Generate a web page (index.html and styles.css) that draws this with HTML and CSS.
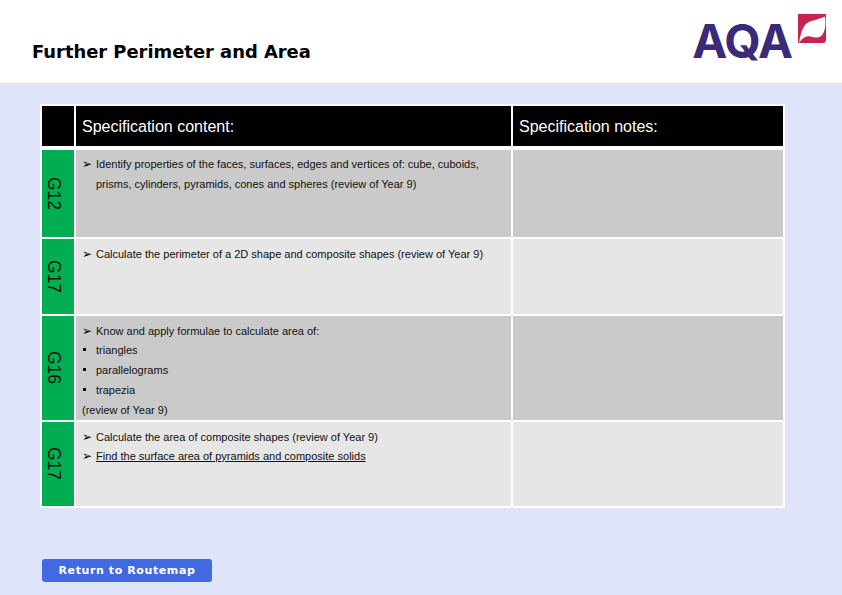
FILE: index.html
```html
<!DOCTYPE html>
<html lang="en">
<head>
<meta charset="utf-8">
<title>Further Perimeter and Area</title>
<link rel="stylesheet" href="styles.css">
</head>
<body>
<header class="top">
  <h1 class="title">Further Perimeter and Area</h1>
  <div class="logo">
    <span class="logo-text">AQA</span>
    <svg class="leaf" viewBox="0 0 28 29" width="28" height="29" aria-hidden="true">
      <path d="M0 0H28V25.500Q28 29 24.500 29H0Z" fill="#c8234f"/>
      <path d="M1 29C2 21 4 15 7 11C11.500 6 20 6 27 2.500C28 10 27.500 16 24.500 20.500C21.500 24.500 17 24 12 22.500C8 21.500 4.500 24 1 29Z" fill="#fff"/>
    </svg>
  </div>
</header>
<main class="content">
  <section class="spec">
    <div class="head blank"></div>
    <div class="head">Specification content:</div>
    <div class="head">Specification notes:</div>

    <div class="code first-row"><span>G12</span></div>
    <div class="cell dark first-row">
      <p class="arrow">Identify properties of the faces, surfaces, edges and vertices of: cube, cuboids,</p>
      <p class="cont">prisms, cylinders, pyramids, cones and spheres (review of Year 9)</p>
    </div>
    <div class="cell dark first-row"></div>

    <div class="code row-b"><span>G17</span></div>
    <div class="cell light row-b">
      <p class="arrow">Calculate the perimeter of a 2D shape and composite shapes (review of Year 9)</p>
    </div>
    <div class="cell light row-b"></div>

    <div class="code row-c"><span>G16</span></div>
    <div class="cell dark row-c">
      <p class="arrow">Know and apply formulae to calculate area of:</p>
      <p class="square">triangles</p>
      <p class="square">parallelograms</p>
      <p class="square">trapezia</p>
      <p class="plain">(review of Year 9)</p>
    </div>
    <div class="cell dark row-c"></div>

    <div class="code row-d"><span>G17</span></div>
    <div class="cell light row-d">
      <p class="arrow">Calculate the area of composite shapes (review of Year 9)</p>
      <p class="arrow"><u>Find the surface area of pyramids and composite solids</u></p>
    </div>
    <div class="cell light row-d"></div>
  </section>
  <a class="return" href="#">Return to Routemap</a>
</main>
</body>
</html>
```
FILE: styles.css
```css
* { box-sizing: border-box; }
html, body { margin: 0; padding: 0; }
body {
  width: 842px;
  height: 595px;
  overflow: hidden;
  background: #e0e4fb;
  font-family: "Liberation Sans", Arial, sans-serif;
}
.top {
  height: 83px;
  background: #fff;
  display: flex;
  justify-content: space-between;
  padding: 14px 16px 0 32px;
}
.title {
  margin: 26px 0 0;
  font: bold 17.900px/24px "DejaVu Sans", Verdana, sans-serif;
  color: #000;
}
.logo {
  display: flex;
  align-items: flex-start;
  gap: 6px;
}
.logo-text {
  margin-top: 2px;
  font: 700 47px/50px Inter, "Liberation Sans", Arial, sans-serif;
  letter-spacing: -1px;
  color: #3b2a78;
}
.leaf { display: block; }
.content {
  padding: 21px 0 0 40px;
}
.spec {
  width: 745px;
  background: #fff;
  padding: 2px;
  display: grid;
  grid-template-columns: 32px 435px 270px;
  grid-template-rows: 40px 89px 75px 104px 84px;
  column-gap: 2px;
  row-gap: 2px;
}
.head {
  background: #000;
  color: #fff;
  font-size: 16px;
  line-height: 42px;
  padding-left: 6px;
}
.first-row { margin-top: 2px; }
.code {
  background: #00ae52;
  display: flex;
  align-items: center;
  justify-content: center;
}
.code span {
  writing-mode: vertical-rl;
  font-size: 17.500px;
  line-height: 24px;
  color: #06140c;
  margin-left: -8px;
}
.cell {
  padding-top: 6px;
  font-size: 11px;
  line-height: 20px;
  color: #111;
}
.cell.first-row { padding-top: 5px; }
.dark { background: #cacaca; }
.light { background: #e6e6e6; }
.cell p {
  margin: 0;
  position: relative;
  padding-left: 20px;
}
.cell .arrow { line-height: 19px; }
.row-c .arrow { margin-bottom: -1px; }
.cell .plain { padding-left: 6px; }
.arrow::before {
  content: "\27A2";
  position: absolute;
  left: 6px;
  font-family: "DejaVu Sans", sans-serif;
  font-size: 12px;
  color: #000;
}
.square::before {
  content: "";
  position: absolute;
  left: 7px;
  top: 8px;
  width: 3px;
  height: 3px;
  background: #111;
}
.return {
  display: block;
  width: 170px;
  height: 23px;
  margin: 51px 0 0 2px;
  background: #4169e1;
  border-radius: 3px;
  color: #fff;
  text-decoration: none;
  text-align: center;
  font: bold 11px/23px "DejaVu Sans", Verdana, sans-serif;
  letter-spacing: 0.600px;
}
```
